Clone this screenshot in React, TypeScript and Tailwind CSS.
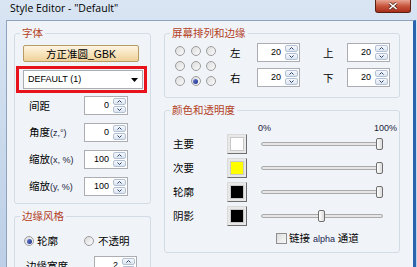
import React from "react";

function SpinBtn({ up }: { up?: boolean }) {
  return (
    <div className="flex-1 flex items-center justify-center rounded-[2px] border border-[#b3c1d4] bg-gradient-to-b from-[#f7f9fc] to-[#dbe4ef]">
      <svg width="5" height="3" viewBox="0 0 5 3">
        {up ? (
          <path d="M0.5 2.5 L2.5 0.5 L4.5 2.5" fill="none" stroke="#2d4470" strokeWidth="1" />
        ) : (
          <path d="M0.5 0.5 L2.5 2.5 L4.5 0.5" fill="none" stroke="#2d4470" strokeWidth="1" />
        )}
      </svg>
    </div>
  );
}

function Spin({ value, wide }: { value: string; wide?: boolean }) {
  return (
    <div
      className={
        wide
          ? "flex h-[19px] w-[44px] border border-[#abadb3] bg-white"
          : "flex h-[19px] w-[43px] border border-[#abadb3] bg-white"
      }
    >
      <div className="flex-1 text-right pr-[4px] text-[9px] leading-[17px] text-black">{value}</div>
      <div className="flex flex-col w-[14px] py-[1px] pr-[1px] gap-[1px]">
        <SpinBtn up />
        <SpinBtn />
      </div>
    </div>
  );
}

function Radio({ checked }: { checked?: boolean }) {
  return (
    <span className="flex w-[10px] h-[10px] shrink-0 items-center justify-center rounded-full border border-[#9c9c9c] bg-gradient-to-br from-[#dcdcdc] to-[#fbfbfb]">
      {checked && <span className="w-[5px] h-[5px] rounded-full bg-gradient-to-br from-[#6b7fd6] to-[#1d2c86]" />}
    </span>
  );
}

function Group({
  title,
  className,
  children,
}: {
  title: string;
  className: string;
  children?: React.ReactNode;
}) {
  return (
    <div className={className}>
      <span className="absolute -top-[8px] left-[5px] px-[2px] bg-[#f0f4f9] text-[#b3411e] text-[10.5px] leading-[14px]">
        {title}
      </span>
      {children}
    </div>
  );
}

function Swatch({ color }: { color: string }) {
  return (
    <div className="w-[20px] h-[20px] p-[2px] border border-[#d9d9d9] border-r-[#6e6e6e] border-b-[#6e6e6e] bg-[#e8e8e8]">
      <div className="w-full h-full border border-[#c8c8c8]" style={{ background: color }} />
    </div>
  );
}

function Slider({ pos }: { pos: number }) {
  return (
    <div className="relative w-[122px] h-[14px] flex items-center">
      <div className="w-full h-[4px] rounded-[2px] border border-[#a9a9a9] bg-[#e6e6e6]" />
      <div
        className="absolute top-[1px] w-[7px] h-[12px] rounded-[2px] border border-[#6f6f6f] bg-gradient-to-r from-[#ffffff] to-[#dcdcdc]"
        style={{ left: pos }}
      />
    </div>
  );
}

export default function App() {
  const colors = [
    { label: "主要", color: "#ffffff", pos: 115 },
    { label: "次要", color: "#ffff00", pos: 115 },
    { label: "轮廓", color: "#000000", pos: 115 },
    { label: "阴影", color: "#000000", pos: 57 },
  ];
  const spins = [
    { label: "间距", latin: "", value: "0" },
    { label: "角度", latin: "(z,°)", value: "0" },
    { label: "缩放", latin: "(x, %)", value: "100" },
    { label: "缩放", latin: "(y, %)", value: "100" },
  ];
  return (
    <div className="w-[417px] h-[267px] overflow-hidden flex flex-col bg-gradient-to-b from-[#d9e5f3] to-[#bccfe6] font-['Liberation_Sans','Noto_Sans_CJK_SC',sans-serif] text-black">
      {/* title bar */}
      <div className="h-[20px] flex items-start justify-between shrink-0">
        <div className="pl-[10px] pt-[2px] text-[10.5px] leading-[13px] text-black font-['Open_Sans',sans-serif]">
          Style Editor - "Default"
        </div>
        <div className="mr-[6px] w-[36px] h-[13px] flex items-center justify-center rounded-b-[3px] border border-t-0 border-[#5b2015] bg-gradient-to-b from-[#e7a593] via-[#c8553e] to-[#a92f19]">
          <svg width="10" height="8" viewBox="0 0 10 8">
            <path d="M1.5 1 L8.5 7 M8.5 1 L1.5 7" stroke="#5a2a20" strokeWidth="3" />
            <path d="M1.5 1 L8.5 7 M8.5 1 L1.5 7" stroke="#ffffff" strokeWidth="1.6" />
          </svg>
        </div>
      </div>
      {/* client */}
      <div className="flex-1 ml-[6px] mr-[1px] flex bg-[#f0f4f9] border-t border-l border-[#8ea3be] border-r-[3px] border-r-[#2a66b0] pl-[7px] pt-[12px] gap-[13px]">
        {/* left column */}
        <div className="w-[137px] flex flex-col gap-[12px]">
          <Group title="字体" className="relative h-[171px] border border-[#d3dce4] rounded-[3px] flex flex-col">
            <div className="mt-[11px] ml-[8px] w-[116px] h-[17px] flex items-center justify-center rounded-[2px] border border-[#b89a63] bg-gradient-to-b from-[#fdf5e4] via-[#f7e4bd] to-[#efd199] text-[10.5px] leading-[14px]">
              方正准圆_GBK
            </div>
            <div className="mt-[4px] ml-[1px] w-[131px] h-[27px] border-[3px] border-[#e8121a] pl-[4px] pt-[1px]">
              <div className="w-[120px] h-[19px] flex items-center justify-between border border-[#abadb3] bg-white pl-[4px] pr-[4px]">
                <span className="text-[9px] leading-[11px]">DEFAULT (1)</span>
                <svg width="7" height="4" viewBox="0 0 7 4">
                  <path d="M0 0 L7 0 L3.5 4 Z" fill="#000" />
                </svg>
              </div>
            </div>
            <div className="mt-[3px] flex flex-col gap-[8px]">
              {spins.map((s, i) => (
                <div key={i} className="flex items-center h-[19px]">
                  <div className="w-[69px] pl-[14px] text-[10.5px] leading-[14px] whitespace-nowrap">
                    {s.label}
                    {s.latin && <span className="text-[9px] text-[#1c1c3c]">{s.latin}</span>}
                  </div>
                  <Spin value={s.value} wide />
                </div>
              ))}
            </div>
          </Group>
          <Group title="边缘风格" className="relative flex-1 border border-[#d3dce4] rounded-t-[3px] border-b-0 flex flex-col">
            <div className="mt-[19px] flex items-center h-[10px] pl-[9px]">
              <Radio checked />
              <span className="ml-[3px] text-[10.5px] leading-[14px]">轮廓</span>
              <span className="ml-[26px]">
                <Radio />
              </span>
              <span className="ml-[4px] text-[10.5px] leading-[14px]">不透明</span>
            </div>
            <div className="mt-[10px] flex items-center h-[19px]">
              <div className="w-[79px] pl-[11px] text-[10.5px] leading-[14px]">边缘宽度</div>
              <Spin value="2" />
            </div>
          </Group>
        </div>
        {/* right column */}
        <div className="w-[236px] flex flex-col gap-[12px]">
          <Group title="屏幕排列和边缘" className="relative h-[65px] border border-[#d3dce4] rounded-[3px] flex items-start">
            <div className="mt-[12px] ml-[10px] grid grid-cols-3 gap-x-[5.5px] gap-y-[5px]">
              <Radio />
              <Radio />
              <Radio />
              <Radio />
              <Radio />
              <Radio />
              <Radio />
              <Radio checked />
              <Radio />
            </div>
            <div className="mt-[9px] ml-[14px] grid grid-cols-[27px_43px_23px_24px_43px] gap-y-[6px] items-center">
              <span className="text-[10.5px] leading-[14px]">左</span>
              <Spin value="20" />
              <span />
              <span className="text-[10.5px] leading-[14px]">上</span>
              <Spin value="20" />
              <span className="text-[10.5px] leading-[14px]">右</span>
              <Spin value="20" />
              <span />
              <span className="text-[10.5px] leading-[14px]">下</span>
              <Spin value="20" />
            </div>
          </Group>
          <Group title="颜色和透明度" className="relative h-[143px] border border-[#d3dce4] rounded-[3px] flex flex-col">
            <div className="mt-[12px] ml-[93px] w-[139px] flex justify-between text-[9px] leading-[11px] text-[#1c1c3c]">
              <span>0%</span>
              <span>100%</span>
            </div>
            <div className="mt-[0px] flex flex-col gap-[4px]">
              {colors.map((c, i) => (
                <div key={i} className="flex items-center h-[20px]">
                  <div className="w-[62px] pl-[8px] text-[10.5px] leading-[14px]">{c.label}</div>
                  <Swatch color={c.color} />
                  <div className="ml-[14px]">
                    <Slider pos={c.pos} />
                  </div>
                </div>
              ))}
            </div>
            <div className="mt-[5px] ml-[111px] flex items-center gap-[2px]">
              <span className="w-[11px] h-[11px] border border-[#8f8f8f] bg-gradient-to-br from-[#dedede] to-[#f8f8f8]" />
              <span className="text-[10.5px] leading-[14px]">
                链接 <span className="text-[9px] text-[#1c1c50]">alpha</span> 通道
              </span>
            </div>
          </Group>
        </div>
      </div>
    </div>
  );
}
